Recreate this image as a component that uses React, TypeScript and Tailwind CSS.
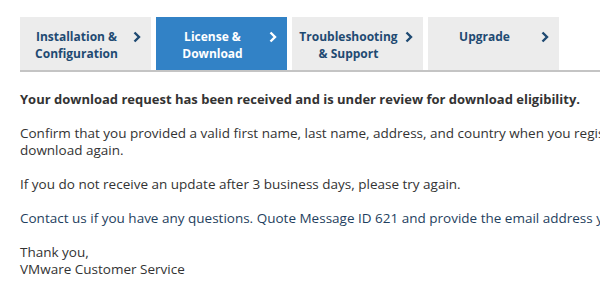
const tabs = [
  { lines: ['Installation &', 'Configuration'], active: false },
  { lines: ['License &', 'Download'], active: true },
  { lines: ['Troubleshooting', '& Support'], active: false },
  { lines: ['Upgrade'], active: false },
]

function Chevron({ className }: { className: string }) {
  return (
    <svg width="8" height="12" viewBox="0 0 8 12" className={className}>
      <path d="M1.5 1.5 L6 6 L1.5 10.5" fill="none" stroke="currentColor" strokeWidth="2.4" />
    </svg>
  )
}

export default function App() {
  return (
    <div className="h-[289px] w-[600px] overflow-hidden bg-white pl-5 pt-[17px] font-['Open_Sans',sans-serif] text-[13.5px] leading-[17px] text-[#333]">
      <div className="flex gap-[5px] border-b-2 border-[#c4c4c4] text-[12px]">
        {tabs.map((t) => (
          <div
            key={t.lines[0]}
            className={`flex h-[53px] w-[131px] items-start pt-[11px] pr-[10px] font-bold ${
              t.active ? 'bg-[#3282c6] text-white' : 'bg-[#ececec] text-[#1f4a72]'
            }`}
          >
            <div className="flex-1 text-center">
              {t.lines.map((l) => (
                <div key={l} className="whitespace-nowrap">{l}</div>
              ))}
            </div>
            <Chevron className="mt-[3px] shrink-0" />
          </div>
        ))}
      </div>
      <div className="whitespace-nowrap pt-[19px]">
        <p className="text-[13px] font-bold">
          Your download request has been received and is under review for download eligibility.
        </p>
        <p className="mt-[17px]">
          Confirm that you provided a valid first name, last name, address, and country when you registered, and then try the
          <br />
          download again.
        </p>
        <p className="mt-[17px]">If you do not receive an update after 3 business days, please try again.</p>
        <p className="mt-[17px] text-[#1f3f60]">
          Contact us if you have any questions. Quote Message ID 621 and provide the email address you used.
        </p>
        <p className="mt-[17px]">
          Thank you,
          <br />
          VMware Customer Service
        </p>
      </div>
    </div>
  )
}
